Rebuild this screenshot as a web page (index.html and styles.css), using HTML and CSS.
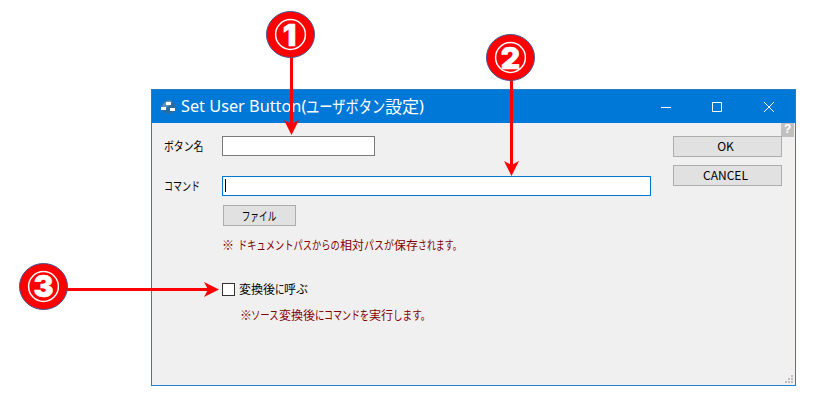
FILE: index.html
```html
<!DOCTYPE html>
<html lang="ja">
<head>
<meta charset="utf-8">
<title>Set User Button</title>
<link rel="stylesheet" href="styles.css">
</head>
<body>
<main class="dialog">
  <header class="titlebar">
    <svg class="app-icon" width="16" height="16" viewBox="0 0 16 16"><circle cx="8.500" cy="8" r="7" fill="#286ca5"/><path d="M3 5a7 7 0 0 1 9-3l-2 4-5 4-4-1z" fill="#5b91b9"/><path d="M6 3h5v3H6zM1 8h5v3H1zM10 9h5v3h-5z" fill="#fff"/></svg>
    <h1 class="title"><span class="latin">Set User Button(</span><span class="seg title-kana">ユーザボタン</span><span class="seg title-kanji">設定</span><span>)</span></h1>
    <svg class="controls" width="120" height="14" viewBox="0 0 120 14" fill="none" stroke="#fff"><path d="M1 7.500h10M52.500 2.500h9v9h-9zM104 2l10 10M114 2l-10 10"/></svg>
  </header>
  <section class="content">
    <form class="fields">
      <label class="label name-label"><span class="t t-name">ボタン名</span></label>
      <div class="input name-input"></div>
      <label class="label command-label"><span class="t t-command">コマンド</span></label>
      <div class="input command-input"><i class="caret"></i></div>
      <button type="button" class="button file"><span class="t t-file">ファイル</span></button>
      <p class="note path-note"><span class="seg mark-wide">※</span><span class="seg path-a">ドキュメントパスからの</span><span class="seg kanji2">相対</span><span class="seg path-b">パスが</span><span class="seg kanji2">保存</span><span class="seg ending">されます。</span></p>
      <label class="check"><i class="box"></i><span class="seg kanji3">変換後</span><span class="seg ni">に</span><span class="seg kanji1">呼</span><span class="seg">ぶ</span></label>
      <p class="note run-note"><span class="seg mark">※</span><span class="seg source">ソース</span><span class="seg kanji3">変換後</span><span class="seg ni">に</span><span class="seg command">コマンドを</span><span class="seg kanji2">実行</span><span class="seg ending2">します。</span></p>
    </form>
    <div class="actions">
      <button type="button" class="button"><span class="ok">OK</span></button>
      <button type="button" class="button"><span class="cancel">CANCEL</span></button>
    </div>
  </section>
  <span class="help">?</span>
  <svg class="grip" width="8" height="8" fill="#bfbfbf"><path d="M6 0h2v2H6zM3 3h2v2H3zM6 3h2v2H6zM0 6h2v2H0zM3 6h2v2H3zM6 6h2v2H6z"/></svg>
</main>
<svg class="callouts" width="822" height="405" viewBox="0 0 822 405">
  <g stroke="#f00" stroke-width="3"><path d="M291.500 57v68M511.500 80v85M66 289.500h142"/></g>
  <g fill="#f00"><path d="M291.500 135l-7.500-15 7.500 4 7.500-4z"/><path d="M511.500 176l-7.500-15 7.500 4 7.500-4z"/><path d="M219 289.500l-15-7.500 4 7.500-4 7.500z"/></g>
  <g fill="#f00" stroke="#40558f"><ellipse cx="290.500" cy="34.500" rx="24" ry="23"/><ellipse cx="510.500" cy="57.500" rx="24" ry="23"/><ellipse cx="43.500" cy="286.500" rx="24" ry="23"/></g>
  <g fill="none" stroke="#fff" stroke-width="1.500"><circle cx="290.500" cy="34.500" r="14.900"/><circle cx="510.500" cy="57.500" r="14.900"/><circle cx="43.500" cy="286.500" r="14.900"/></g>
  <g class="digits"><text x="289.500" y="45.500">1</text><text x="510.500" y="68.500">2</text><text x="43.500" y="297.200">3</text></g>
</svg>
</body>
</html>
```
FILE: styles.css
```css
* { box-sizing: border-box; }
body { margin: 0; width: 822px; height: 405px; overflow: hidden; padding: 89px 0 0 151px; background: #fff; color: #000; font: 12px/14px "Noto Sans CJK JP", sans-serif; position: relative; }
.dialog { width: 645px; height: 297px; background: #f0f0f0; border: 1px solid #2580cb; position: relative; }
.titlebar { height: 33px; background: #0078d7; color: #fff; display: flex; align-items: center; padding: 0 15px 0 8px; }
.app-icon { flex: none; }
.title { margin: -2px 0 0 5px; font: 16.300px/24px "Noto Sans", "Noto Sans CJK JP", sans-serif; white-space: nowrap; display: flex; }
.latin { width: 125px; }
.title-kana { width: 79px; font-family: "Noto Sans CJK JP"; font-size: 17px; transform: scaleX(.78); }
.title-kanji { width: 34px; font-family: "Noto Sans CJK JP"; font-size: 17px; }
.controls { margin-left: auto; flex: none; }
.content { display: flex; justify-content: space-between; padding: 13px 13px 0 12px; }
.fields { display: grid; grid-template-columns: 58px 429px; grid-template-rows: 20px 20px 20px 8px 22px 10px 18px 27px 16px 9px 18px; }
.label { grid-column: 1; display: flex; align-items: center; }
.name-input, .name-label { grid-row: 1; }
.command-input, .command-label { grid-row: 3; }
.input { grid-column: 2; background: #fff; border: 1px solid #7a7a7a; }
.name-input { width: 153px; }
.command-input { border-color: #0078d7; padding: 2px; }
.caret { display: block; width: 1px; height: 13px; background: #000; }
.button { background: #e1e1e1; border: 1px solid #adadad; padding: 0; color: #000; height: 21px; font: inherit; display: flex; align-items: center; justify-content: center; }
.file { grid-column: 2; grid-row: 5; width: 73px; margin: 1px 0 0 1px; }
.note { margin: 0; color: #800000; line-height: 18px; display: flex; }
.path-note { grid-column: 2; grid-row: 7; }
.check { grid-column: 2; grid-row: 9; display: flex; align-items: center; line-height: 16px; }
.box { width: 13px; height: 13px; margin-top: 1px; background: #fff; border: 1px solid #333; margin-right: 4px; }
.run-note { grid-column: 2; grid-row: 11; padding-left: 18px; }
.t, .seg { display: block; white-space: nowrap; transform-origin: left; }
.t-name { transform: scaleX(.82); }
.t-command { transform: scaleX(.75); }
.t-file { transform: scaleX(.72); transform-origin: center; }
.seg { flex: none; }
.mark-wide { width: 16px; }
.mark { width: 11px; }
.path-a { width: 102px; transform: scaleX(.77); }
.path-b { width: 30px; transform: scaleX(.83); }
.kanji1 { width: 12px; }
.kanji2 { width: 24px; }
.kanji3 { width: 36px; }
.ni { width: 9px; transform: scaleX(.8); }
.ending { width: 44px; transform: scaleX(.74); }
.source { width: 28px; transform: scaleX(.78); }
.command { width: 45px; transform: scaleX(.75); }
.ending2 { width: 36px; transform: scaleX(.8); }
.actions { display: grid; row-gap: 8px; align-content: start; width: 109px; }
.ok, .cancel { font: 12px/14px "Noto Sans CJK JP"; }
.ok { margin: -2px 4px 0 0; }
.cancel { margin: -2px 4px 0 0; }
.help { position: absolute; right: 1px; top: 33px; width: 13px; height: 14px; background: #c0c0c0; color: #fff; font: bold 12px/15px "Liberation Mono", monospace; text-align: center; clip-path: polygon(0 0, 100% 0, 100% 100%, 1px 100%, 1px 13px, 0 13px); }
.grip { position: absolute; right: 2px; bottom: 2px; }
.callouts { position: absolute; left: 0; top: 0; }
.digits { fill: #fff; stroke: #fff; stroke-width: .5; font: 900 30px Inter, "Liberation Sans", sans-serif; text-anchor: middle; }
```
